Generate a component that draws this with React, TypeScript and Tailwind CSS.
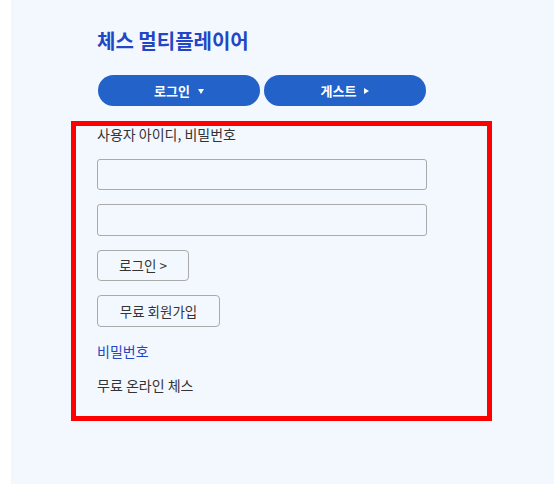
const font = { fontFamily: '"Noto Sans CJK KR", "Noto Sans", sans-serif' };

const TriDown = () => (
  <svg width="6" height="5" viewBox="0 0 6 5" className="mt-px">
    <path d="M0 0h6L3 5z" fill="#fff" />
  </svg>
);

const TriRight = () => (
  <svg width="5" height="6" viewBox="0 0 5 6" className="mt-px">
    <path d="M0 0v6l5-3z" fill="#fff" />
  </svg>
);

export default function App() {
  return (
    <div className="min-h-[484px] bg-white pl-[11px]" style={font}>
      <div className="min-h-[484px] bg-[#f3f8ff] pl-[86px] pt-[26px]">
        <h1 className="text-[20px] font-bold leading-[30px] text-[#2346c4]">체스 멀티플레이어</h1>

        <div className="mt-[19px] flex gap-[4px] pl-px">
          <button className="flex h-[31px] w-[162px] items-center justify-center gap-[8px] rounded-full bg-[#2362c9] text-[13px] font-bold text-white">
            로그인
            <TriDown />
          </button>
          <button className="flex h-[31px] w-[162px] items-center justify-center gap-[8px] rounded-full bg-[#2362c9] text-[13px] font-bold text-white">
            게스트
            <TriRight />
          </button>
        </div>

        <div className="relative mt-[18px] w-[330px]">
          {/* highlight box */}
          <div className="pointer-events-none absolute left-[-26px] top-[-3px] h-[300px] w-[421px] border-[5px] border-[#ff0000]" />

          <p className="text-[14px] leading-[20px] text-[#333]">사용자 아이디, 비밀번호</p>

          <input className="mt-[15px] block h-[31px] w-[330px] rounded-[3px] border border-[#aaaaaa] bg-transparent" />
          <input className="mt-[14px] block h-[32px] w-[330px] rounded-[3px] border border-[#aaaaaa] bg-transparent" />

          <button className="mt-[14px] block h-[31px] w-[92px] rounded-[4px] border border-[#aaaaaa] bg-transparent text-[13.5px] text-[#333]">
            로그인 &gt;
          </button>
          <button className="mt-[14px] block h-[32px] w-[123px] rounded-[4px] border border-[#aaaaaa] bg-transparent text-[13.5px] text-[#333]">
            무료 회원가입
          </button>

          <p className="mt-[14px] text-[14px] leading-[20px] text-[#2346c4]">비밀번호</p>
          <p className="mt-[14px] text-[14px] leading-[20px] text-[#333]">무료 온라인 체스</p>
        </div>
      </div>
    </div>
  );
}
